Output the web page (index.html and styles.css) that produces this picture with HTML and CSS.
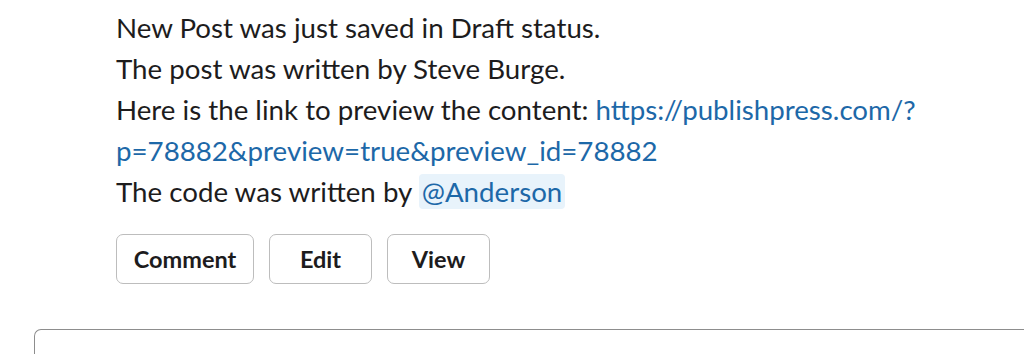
FILE: index.html
```html
<!DOCTYPE html>
<html>
<head>
<meta charset="utf-8">
<link rel="stylesheet" href="styles.css">
</head>
<body>
<div class="page">
  <div class="message">
    <p class="line">New Post was just saved in Draft status.</p>
    <p class="line">The post was written by Steve Burge.</p>
    <p class="line">Here is the link to preview the content: <a class="link" href="#">https://publishpress.com/?<wbr>p=78882&amp;preview=true&amp;preview_id=78882</a></p>
    <p class="line">The code was written by <span class="mention">@Anderson</span></p>
    <div class="actions">
      <button class="btn btn-comment">Comment</button>
      <button class="btn btn-edit">Edit</button>
      <button class="btn btn-view">View</button>
    </div>
  </div>
  <div class="composer"></div>
</div>
</body>
</html>
```
FILE: styles.css
```css
html, body {
  margin: 0;
  padding: 0;
  background: #ffffff;
}
body {
  font-family: Lato, "Liberation Sans", sans-serif;
  color: #1d1c1d;
  width: 1024px;
  height: 354px;
  overflow: hidden;
}
.page {
  padding-top: 7px;
}
.message {
  padding-left: 116px;
  width: 840px;
}
.line {
  margin: 0;
  font-size: 27.7px;
  line-height: 41px;
}
.link {
  color: #1d68a8;
  text-decoration: none;
}
.mention {
  color: #1d68a8;
  background: #e8f3fb;
  border-radius: 4px;
  padding: 1px 3px;
}
.actions {
  display: flex;
  gap: 15px;
  margin-top: 22px;
}
.btn {
  font-family: Lato, "Liberation Sans", sans-serif;
  font-weight: 700;
  font-size: 23.5px;
  color: #1d1c1d;
  background: #ffffff;
  border: 1.5px solid #bdbdbd;
  border-radius: 7px;
  height: 50px;
  padding: 0;
}
.btn-comment { width: 138px; }
.btn-edit { width: 103px; }
.btn-view { width: 103px; }
.composer {
  margin-top: 45px;
  margin-left: 34px;
  height: 40px;
  border: 1.5px solid #8d8d8d;
  border-right: none;
  border-radius: 7px 0 0 0;
}
```
